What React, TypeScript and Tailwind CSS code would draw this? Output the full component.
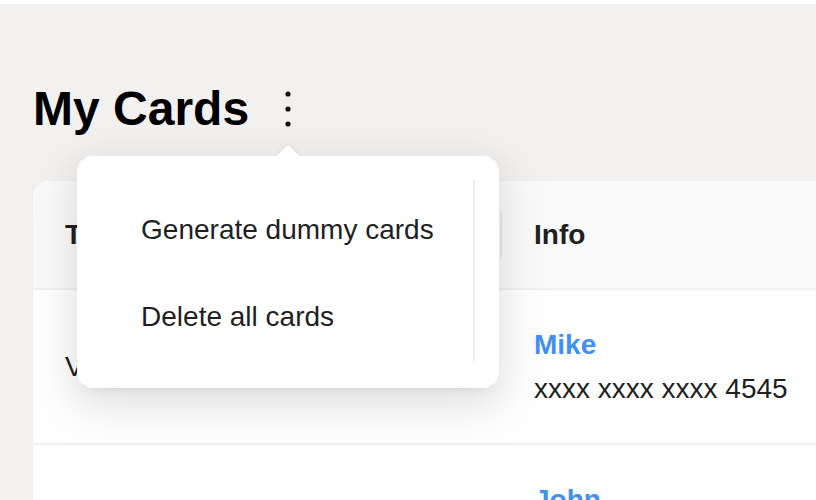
const ROWS = [
  { type: "Visa", name: "Mike", number: "xxxx xxxx xxxx 4545" },
  { type: "Mastercard", name: "John", number: "xxxx xxxx xxxx 1212" },
];

const MENU = ["Generate dummy cards", "Delete all cards"];

function KebabMenu() {
  return (
    <div className="relative ml-[23px]">
      <button className="flex h-10 w-8 items-center justify-center">
        <svg width="8" height="40" viewBox="0 0 8 40">
          <circle cx="4" cy="5" r="2.6" fill="#111" />
          <circle cx="4" cy="20" r="2.6" fill="#111" />
          <circle cx="4" cy="35" r="2.6" fill="#111" />
        </svg>
      </button>

      {/* popover */}
      <div className="absolute left-[-195px] top-[67px] z-10 h-[232px] w-[422px] rounded-2xl bg-white shadow-[0_12px_32px_rgba(0,0,0,0.08),0_6px_12px_-8px_rgba(0,0,0,0.12),0_18px_56px_16px_rgba(0,0,0,0.05)]">
        <div className="absolute left-[203px] top-[-8px] h-4 w-4 rotate-45 rounded-tl-[3px] bg-white shadow-[-2px_-2px_5px_rgba(0,0,0,0.04)]" />
        <div className="relative flex h-full flex-col gap-[1px] pt-[31px]">
          {MENU.map((item) => (
            <div
              key={item}
              className="py-[25px] pl-16 text-[28px] leading-9 text-[#1f1f1f]"
            >
              {item}
            </div>
          ))}
          <div className="absolute right-[24px] top-[24px] bottom-[25px] w-[2px] bg-[#efefef]" />
        </div>
      </div>
    </div>
  );
}

export default function App() {
  return (
    <div className="h-[500px] overflow-hidden bg-white font-['Liberation_Sans',Arial,sans-serif]">
      <div className="h-1 bg-white" />
      <div className="relative h-[496px] overflow-hidden bg-[#f2f1f0] pl-[33px] pt-[77px]">
        <div className="flex h-14 items-center">
          <h1 className="text-[48px] font-bold leading-[56px] text-black">
            My Cards
          </h1>
          <KebabMenu />
        </div>

        <div className="mt-[44px] w-[1000px] overflow-hidden rounded-t-2xl bg-white text-[28px] leading-[44px] text-[#1f1f1f]">
          <div className="flex h-[109px] items-center border-b-2 border-[#f0f0f0] bg-[#fafafa] font-bold">
            <div className="relative flex h-full w-[469px] items-center px-8">
              Type
              <span className="absolute right-0 top-1/2 h-[45px] w-[2px] -translate-y-1/2 bg-[#0000000f]" />
            </div>
            <div className="px-8">Info</div>
          </div>

          {ROWS.map((row) => (
            <div key={row.name} className="flex border-b-2 border-[#f0f0f0]">
              <div className="flex w-[469px] items-center px-8 pb-8 pt-[33px]">
                {row.type}
              </div>
              <div className="px-8 pb-8 pt-[33px]">
                <div className="font-bold text-[#4190f5]">{row.name}</div>
                <div>{row.number}</div>
              </div>
            </div>
          ))}
        </div>
      </div>
    </div>
  );
}
